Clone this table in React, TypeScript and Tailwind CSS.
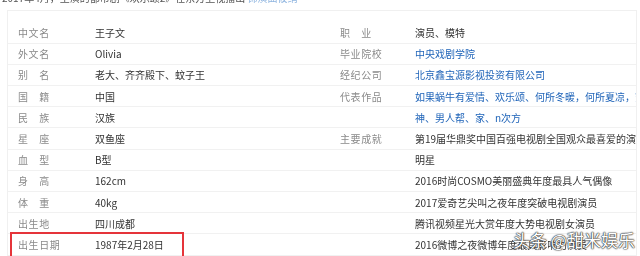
import React from "react";

type Cell = { text: string; link?: boolean };
type Row = { l: string; lv: string; r: string; rv: Cell[] };

const rows: Row[] = [
  { l: "中文名", lv: "王子文", r: "职　业", rv: [{ text: "演员、模特" }] },
  { l: "外文名", lv: "Olivia", r: "毕业院校", rv: [{ text: "中央戏剧学院", link: true }] },
  { l: "别　名", lv: "老大、齐齐殿下、蚊子王", r: "经纪公司", rv: [{ text: "北京鑫宝源影视投资有限公司", link: true }] },
  { l: "国　籍", lv: "中国", r: "代表作品", rv: [{ text: "如果蜗牛有爱情、欢乐颂、何所冬暖，何所夏凉，蜜", link: true }] },
  { l: "民　族", lv: "汉族", r: "", rv: [{ text: "神、男人帮、家、n次方", link: true }] },
  { l: "星　座", lv: "双鱼座", r: "主要成就", rv: [{ text: "第19届华鼎奖中国百强电视剧全国观众最喜爱的演员" }] },
  { l: "血　型", lv: "B型", r: "", rv: [{ text: "明星" }] },
  { l: "身　高", lv: "162cm", r: "", rv: [{ text: "2016时尚COSMO美丽盛典年度最具人气偶像" }] },
  { l: "体　重", lv: "40kg", r: "", rv: [{ text: "2017爱奇艺尖叫之夜年度突破电视剧演员" }] },
  { l: "出生地", lv: "四川成都", r: "", rv: [{ text: "腾讯视频星光大赏年度大势电视剧女演员" }] },
  { l: "出生日期", lv: "1987年2月28日", r: "", rv: [{ text: "2016微博之夜微博年度最具影响力演员" }] },
];

export default function App() {
  return (
    <div
      className="w-[640px] h-[256px] overflow-hidden bg-white relative"
      style={{ fontFamily: '"Noto Sans CJK SC", "Liberation Sans", sans-serif' }}
    >
      <div className="-mt-[8px] h-[12px] pl-[2px] text-[10px] leading-[12px] text-[#555] whitespace-nowrap blur-[0.4px]">
        2017年4月，主演的都市剧《欢乐颂2》在东方卫视播出 <span className="text-[#8fb5e0]">饰演曲筱绡</span>
      </div>
      <div className="ml-[7px] mr-[3px] mt-[6px] border-l border-r border-t border-[#f0f0f0] pt-[11.5px] blur-[0.3px]">
        {rows.map((row, i) => (
          <div key={i} className="flex h-[21.2px] items-center border-b border-[#f1f1f1]">
            <div className="w-[87px] pl-[10px] text-[10px] tracking-[0.6px] text-[#8a8a8a] whitespace-nowrap">
              {row.l}
            </div>
            <div className="w-[245px] text-[10px] text-[#333] whitespace-nowrap">{row.lv}</div>
            <div className="w-[75px] text-[10px] tracking-[0.6px] text-[#8a8a8a] whitespace-nowrap">{row.r}</div>
            <div className="flex-1 overflow-hidden text-[10px] whitespace-nowrap">
              {row.rv.map((c, j) => (
                <span key={j} className={c.link ? "text-[#1e63b8]" : "text-[#333]"}>
                  {c.text}
                </span>
              ))}
            </div>
          </div>
        ))}
      </div>
      <div className="absolute left-[10px] top-[232px] w-[174px] h-[30px] border-2 border-[#e5343a]" />
      <div
        className="absolute left-[513px] top-[229px] text-[17px] leading-[22px] text-white whitespace-nowrap [text-shadow:0_0_1px_#222,0_0_1px_#222,0_0_2px_#444]"
      >
        头条 @甜米娱乐
      </div>
    </div>
  );
}
